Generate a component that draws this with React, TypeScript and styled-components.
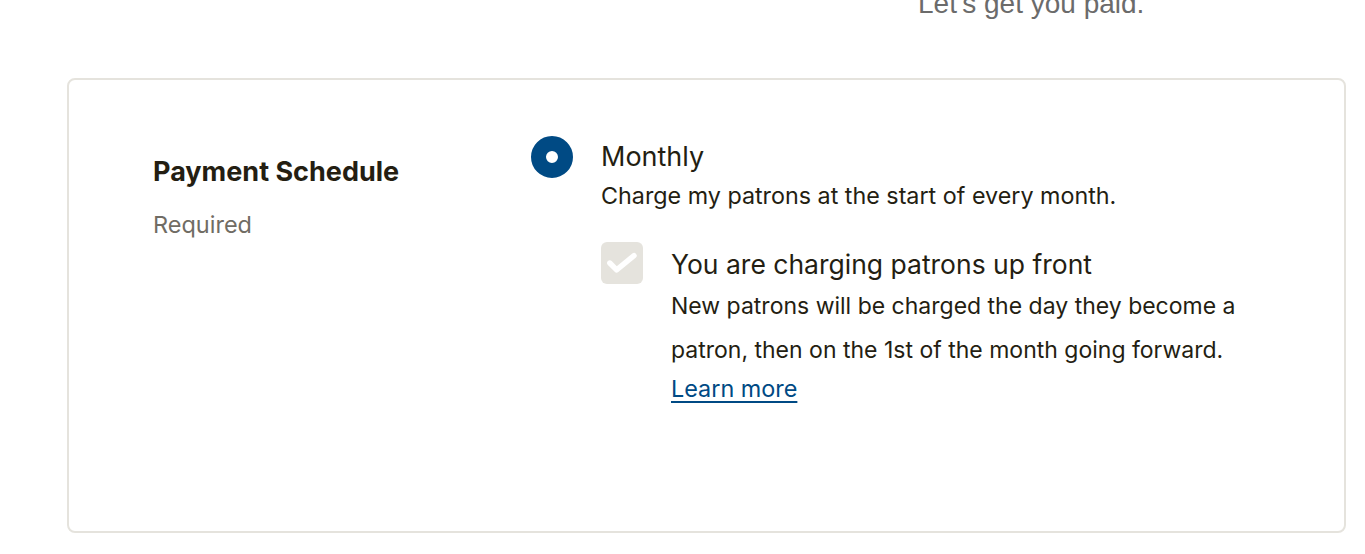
import React from "react";
import styled, { createGlobalStyle } from "styled-components";

const GlobalStyle = createGlobalStyle`
  html, body {
    margin: 0;
    padding: 0;
    background: #ffffff;
    overflow: hidden;
  }
  body {
    font-family: Inter, "Noto Sans", sans-serif;
    color: #241e12;
  }
`;

const App = () => {
  return (
    <Page>
      <GlobalStyle />
      <Header>
        <p className="subtitle">Let's get you paid.</p>
      </Header>
      <Card>
        <Label>
          <p className="label-title">Payment Schedule</p>
          <p className="label-required">Required</p>
        </Label>
        <Options>
          <Option>
            <Radio checked={true} />
            <div className="option-text">
              <p className="option-title">Monthly</p>
              <p className="option-desc">
                Charge my patrons at the start of every month.
              </p>
              <SubOption>
                <Checkbox disabled={true}>
                  <svg width="42" height="42" viewBox="0 0 42 42">
                    <path
                      d="M8.8 21l6.8 6.9L33 13.6"
                      fill="none"
                      stroke="#ffffff"
                      strokeWidth="5.4"
                      strokeLinecap="round"
                      strokeLinejoin="round"
                    />
                  </svg>
                </Checkbox>
                <div className="sub-text">
                  <p className="sub-title">You are charging patrons up front</p>
                  <p className="sub-desc">
                    New patrons will be charged the day they become a patron,
                    then on the 1st of the month going forward.
                  </p>
                  <a className="learn-more" href="#">
                    Learn more
                  </a>
                </div>
              </SubOption>
            </div>
          </Option>
        </Options>
      </Card>
    </Page>
  );
};

const Page = styled.div`
  width: 1365px;
  height: 554px;
  box-sizing: border-box;
  padding: 0 19px 0 67px;
`;

const Header = styled.div`
  height: 78px;
  display: flex;
  align-items: flex-start;
  padding-left: 851px;
  > .subtitle {
    margin: -12px 0 0;
    font-family: "Liberation Sans", Arial, sans-serif;
    font-size: 28px;
    line-height: 32px;
    color: #6b6b6b;
    white-space: nowrap;
  }
`;

const Card = styled.div`
  box-sizing: border-box;
  height: 455px;
  border: 2px solid #e5e3dd;
  border-radius: 8px;
  display: flex;
  padding: 56px 0 0 84px;
`;

const Label = styled.div`
  width: 378px;
  > .label-title {
    margin: 20px 0 0;
    font-size: 27px;
    line-height: 32px;
    font-weight: 700;
    color: #241e12;
  }
  > .label-required {
    margin: 23px 0 0;
    font-size: 23.5px;
    line-height: 28px;
    color: #706c64;
  }
`;

const Options = styled.div`
  flex: 1;
`;

const Option = styled.div`
  display: flex;
  gap: 28px;
  > .option-text {
    flex: 1;
    > .option-title {
      margin: 5px 0 0;
      font-size: 27px;
      line-height: 32px;
      color: #241e12;
    }
    > .option-desc {
      margin: 8px 0 0;
      font-size: 23.3px;
      line-height: 30px;
      color: #241e12;
    }
  }
`;

const Radio = styled.span<{ checked: boolean }>`
  flex: none;
  width: 42px;
  height: 42px;
  box-sizing: border-box;
  border-radius: 50%;
  border: ${(props) => (props.checked ? "15px solid #004a84" : "2px solid #bbb")};
  background: #ffffff;
`;

const SubOption = styled.div`
  display: flex;
  gap: 28px;
  margin-top: 31px;
  > .sub-text {
    flex: 1;
    > .sub-title {
      margin: 4px 0 0;
      font-size: 26.5px;
      line-height: 36px;
      color: #241e12;
    }
    > .sub-desc {
      margin: 2px 0 0;
      max-width: 590px;
      font-size: 23px;
      line-height: 44px;
      color: #241e12;
    }
    > .learn-more {
      display: inline-block;
      margin-top: 2px;
      font-size: 23.4px;
      line-height: 30px;
      color: #004a84;
      text-decoration: underline;
      text-decoration-thickness: 2px;
      text-underline-offset: 4px;
    }
  }
`;

const Checkbox = styled.span<{ disabled: boolean }>`
  flex: none;
  width: 42px;
  height: 42px;
  border-radius: 6px;
  background: ${(props) => (props.disabled ? "#e5e3dd" : "#004a84")};
  display: flex;
  align-items: center;
  justify-content: center;
`;

export default App;
